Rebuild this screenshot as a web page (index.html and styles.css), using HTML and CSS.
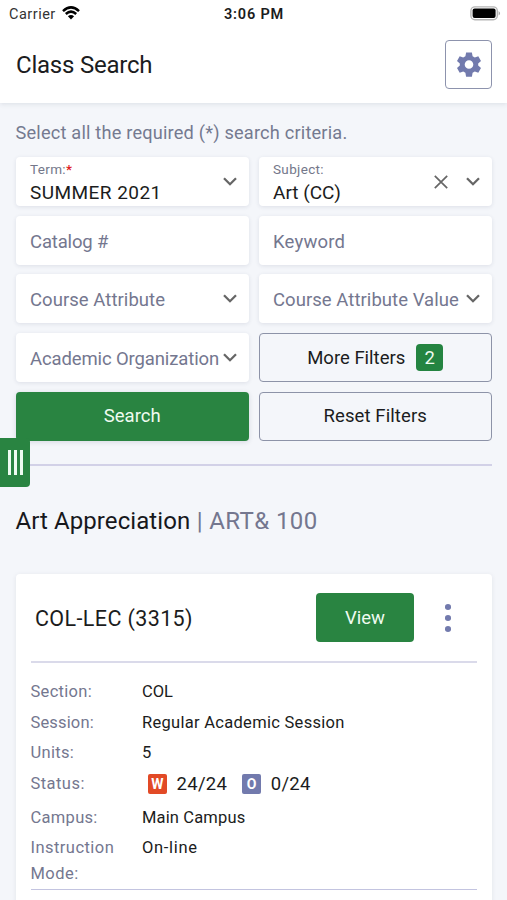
FILE: index.html
```html
<!DOCTYPE html>
<html lang="en">
<head>
<meta charset="utf-8">
<title>Class Search</title>
<link rel="stylesheet" href="styles.css">
</head>
<body>
<header class="header">
  <div class="statusbar">
    <div class="carrier"><span class="t-carrier">Carrier</span>
      <svg class="wifi" viewBox="0 0 18 14"><path d="M9 13.600 5.900 10.300Q9 7.800 12.100 10.300Z"/><path class="arc" d="M1 5.100Q9-2.300 17 5.100M3.800 8Q9 3.300 14.200 8"/></svg>
    </div>
    <span class="clock">3:06 PM</span>
    <svg class="battery" viewBox="0 0 31 15"><rect class="shell" x=".9" y=".9" width="26.400" height="12.800" rx="4"/><rect x="2.600" y="2.600" width="23" height="9.400" rx="2"/><path class="cap" d="M28.600 5v4.600q3-2.300 0-4.600"/></svg>
  </div>
  <div class="titlebar">
    <h1 class="title">Class Search</h1>
    <button class="gear" aria-label="Settings"><svg viewBox="0 0 24 24"><path fill-rule="evenodd" d="M9.100 0h5.800l.7 3.700 2.200 1.300 3.500-1.300 2.700 4.900-2.800 2.300v2.200l2.800 2.400-2.700 4.800-3.500-1.300-2.200 1.300-.7 4H9.100l-.7-4-2.200-1.300-3.500 1.300L0 15.500l2.800-2.400v-2.200L0 8.600l2.700-4.900L6.200 5l2.200-1.300ZM12 7.700a4.300 4.300 0 1 0 0 8.600a4.300 4.300 0 0 0 0-8.600Z"/></svg></button>
  </div>
</header>
<main class="main">
  <p class="hint">Select all the required (*) search criteria.</p>
  <div class="filters">
    <div class="field"><div class="stack"><span class="label t-term">Term:<b class="req">*</b></span><span class="value t-summer">SUMMER 2021</span></div><svg class="chev" viewBox="0 0 14 9"><path d="m1 1.300 6 5.900 6-5.900"/></svg></div>
    <div class="field"><div class="stack"><span class="label t-subject">Subject:</span><span class="value t-art">Art (CC)</span></div><svg class="clear" viewBox="0 0 14 14"><path d="m.8.8 12.400 12.400M13.200.8.8 13.200"/></svg><svg class="chev" viewBox="0 0 14 9"><path d="m1 1.300 6 5.900 6-5.900"/></svg></div>
    <div class="field"><span class="ph t-catalog">Catalog #</span></div>
    <div class="field"><span class="ph t-keyword">Keyword</span></div>
    <div class="field"><span class="ph t-attr">Course Attribute</span><svg class="chev" viewBox="0 0 14 9"><path d="m1 1.300 6 5.900 6-5.900"/></svg></div>
    <div class="field"><span class="ph t-attrval">Course Attribute Value</span><svg class="chev" viewBox="0 0 14 9"><path d="m1 1.300 6 5.900 6-5.900"/></svg></div>
    <div class="field"><span class="ph t-org">Academic Organization</span><svg class="chev" viewBox="0 0 14 9"><path d="m1 1.300 6 5.900 6-5.900"/></svg></div>
    <button class="btn outline"><span class="t-more">More Filters</span><span class="count">2</span></button>
    <button class="btn solid"><span class="t-search">Search</span></button>
    <button class="btn outline"><span class="t-reset">Reset Filters</span></button>
  </div>
  <button class="drawer" aria-label="Menu"><i></i><i></i><i></i></button>
  <hr class="rule">
  <h2 class="course"><span class="t-course">Art Appreciation</span><span class="code"> | ART&amp; 100</span></h2>
  <section class="card">
    <div class="cardhead">
      <h3 class="cls">COL-LEC (3315)</h3>
      <button class="btn solid view"><span class="t-view">View</span></button>
      <button class="dots" aria-label="More"><i></i><i></i><i></i></button>
    </div>
    <dl class="details">
      <dt class="t-section">Section:</dt><dd class="t-col">COL</dd>
      <dt class="t-session">Session:</dt><dd class="t-regular">Regular Academic Session</dd>
      <dt class="t-units">Units:</dt><dd>5</dd>
      <dt class="t-status">Status:</dt><dd class="seats"><span class="tag wait">W</span><span class="num n1">24/24</span><span class="tag open">O</span><span class="num">0/24</span></dd>
      <dt class="t-campus">Campus:</dt><dd class="t-main">Main Campus</dd>
      <dt class="t-mode">Instruction Mode:</dt><dd class="t-online">On-line</dd>
    </dl>
    <hr class="rule end">
  </section>
</main>
</body>
</html>
```
FILE: styles.css
```css
* { box-sizing: border-box; }
html, body { height: 100%; overflow: hidden; }
body { margin: 0; background: #f4f6fa; color: #1b1c20; font-family: Roboto, "Liberation Sans", sans-serif; }
h1, h2, h3, p, dl, dd { margin: 0; font-weight: 400; }
button { font: inherit; color: inherit; padding: 0; border: 0; background: none; }
svg { flex: none; display: block; }

.header { height: 103px; background: #fff; box-shadow: 0 1px 5px rgba(40, 60, 80, .12); position: relative; }
.statusbar { height: 28px; padding: 0 7px 0 9px; display: grid; grid-template-columns: 1fr auto 1fr; align-items: center; }
.carrier { display: flex; align-items: center; gap: 6px; font-size: 14.500px; color: #333; letter-spacing: .5px; }
.wifi { width: 18px; height: 14px; margin-top: -2px; }
.arc { fill: none; stroke: #000; stroke-width: 2.500; }
.clock { font-size: 14.500px; font-weight: 600; letter-spacing: .8px; margin-left: -1px; }
.battery { width: 31px; height: 15px; justify-self: end; margin-right: -1px; margin-top: -1px; }
.shell { fill: #fff; stroke: #b5b5b5; stroke-width: 1.400; }
.cap { fill: #aaa; }
.titlebar { display: flex; justify-content: space-between; align-items: center; padding: 12px 15px 0 16px; }
.title { font-size: 24px; line-height: 28px; letter-spacing: -.22px; }
.gear { width: 47px; height: 49px; border: 1px solid #8d93ad; border-radius: 4px; display: grid; place-items: center; }
.gear svg { width: 24px; height: 25px; fill: #727aad; }

.main { padding: 19px 15px 0 15.500px; position: relative; }
.hint { font-size: 18.200px; line-height: 22px; color: #747a90; letter-spacing: .19px; }
.filters { display: grid; grid-template-columns: 233.500px 233.500px; grid-auto-rows: 49px; gap: 9.700px 9.500px; margin-top: 13px; }
.field { background: #fff; border-radius: 4px; box-shadow: 0 1px 4px rgba(40, 50, 80, .11); padding: 0 12px 0 14.500px; display: flex; align-items: center; min-width: 0; }
.stack { display: flex; flex-direction: column; }
.label { font-size: 13.500px; line-height: 18px; margin-top: -3px; color: #74778a; letter-spacing: .35px; }
.req { color: #e02020; font-weight: 500; }
.value { font-size: 19px; line-height: 24px; margin-top: 3px; margin-bottom: -4px; }
.t-summer { letter-spacing: .45px; }
.ph { font-size: 18.500px; color: #74778f; white-space: nowrap; padding-top: 3px; letter-spacing: .05px; }
.t-catalog { letter-spacing: -.15px; }
.t-keyword { letter-spacing: .2px; }
.t-org { letter-spacing: -.12px; }
.chev { width: 14px; height: 9px; margin-left: auto; fill: none; stroke: #666; stroke-width: 2.300; }
.clear { width: 14px; height: 14px; margin-left: auto; margin-right: 18px; fill: none; stroke: #666; stroke-width: 1.700; }
.clear + .chev { margin-left: 0; }
.btn { border-radius: 4px; font-size: 18.500px; display: flex; align-items: center; justify-content: center; white-space: nowrap; }
.outline { border: 1px solid #8d93a8; }
.t-reset { letter-spacing: .1px; }
.solid { background: #298441; color: #effbf0; box-shadow: 0 1px 5px rgba(40, 50, 80, .15); }
.count { width: 27px; height: 27px; margin-left: 11px; border-radius: 4px; background: #248441; color: #effbf0; display: grid; place-items: center; }
.drawer { position: absolute; left: 0; top: 335px; width: 30px; height: 49px; background: #298441; border-radius: 0 4px 4px 0; display: flex; justify-content: center; align-items: center; gap: 3px; }
.drawer i { width: 3px; height: 25px; background: #eefbf0; }
.rule { height: 2px; margin: 23.500px 0 0; border: 0; background: #d2d1e7; }
.course { font-size: 24px; line-height: 30px; margin-top: 40px; white-space: pre; color: #17181c; letter-spacing: .08px; }
.code { color: #74778f; letter-spacing: .4px; }

.card { margin-top: 37.500px; padding: 0 15px; height: 350px; background: #fff; border-radius: 4px; box-shadow: 0 1px 5px rgba(40, 50, 80, .09); }
.cardhead { height: 89.500px; border-bottom: 2px solid #dadaea; display: flex; align-items: center; padding: 0 26px 0 4.500px; }
.cls { font-size: 21.500px; letter-spacing: .38px; padding-top: 1px; }
.view { width: 98px; height: 49px; margin-left: auto; box-shadow: none; }
.dots { display: flex; flex-direction: column; gap: 5px; margin-left: 30.500px; }
.dots i { width: 6.500px; height: 6px; border-radius: 50%; background: #727aad; }
.details { display: grid; grid-template-columns: 95px 1fr; column-gap: 16.500px; grid-template-rows: 30.500px 30.500px 30.500px 34px 30.500px 53.500px; margin-top: 16px; font-size: 16.500px; line-height: 26px; }
dt { color: #74778f; letter-spacing: .3px; }
.t-session { letter-spacing: .15px; }
.t-status, .t-mode { letter-spacing: .45px; }
.t-regular { letter-spacing: .29px; }
.t-main { letter-spacing: .15px; }
.t-online { letter-spacing: .7px; }
.seats { display: flex; align-items: center; padding-left: 5.500px; height: 27px; }
.tag { width: 19.500px; height: 20px; border-radius: 2px; display: grid; place-items: center; color: #fff; font-size: 14px; line-height: 20px; font-weight: 700; }
.wait { background: #e24a26; }
.open { background: #727aad; margin-left: 14.500px; }
.num { font-size: 18.500px; margin-left: 9.500px; letter-spacing: .3px; }
.end { height: 1px; margin-top: 0; background: #c3c4e0; }
```
